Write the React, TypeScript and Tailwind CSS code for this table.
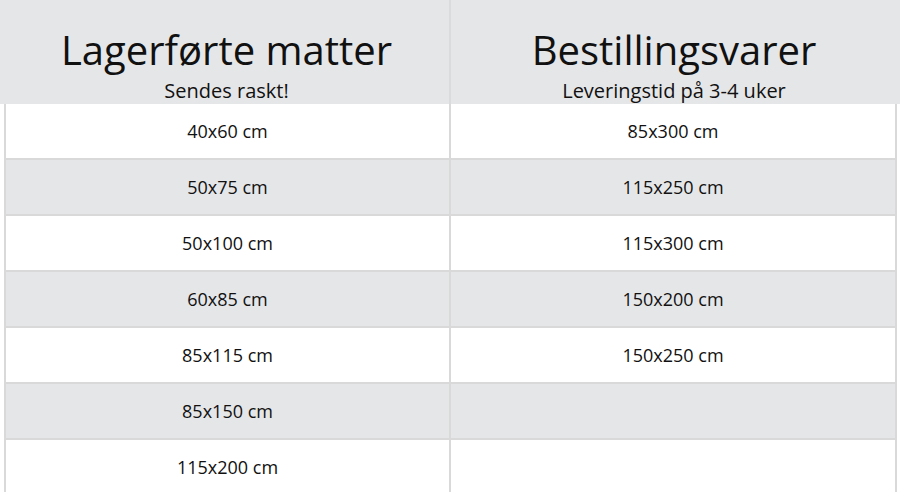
import React from "react";

const lager = ["40x60 cm", "50x75 cm", "50x100 cm", "60x85 cm", "85x115 cm", "85x150 cm", "115x200 cm"];
const bestilling = ["85x300 cm", "115x250 cm", "115x300 cm", "150x200 cm", "150x250 cm", "", ""];

export default function App() {
  return (
    <div className="w-[900px] h-[492px] overflow-hidden bg-white text-[#111] font-['Open_Sans',sans-serif]">
      {/* header */}
      <div className="bg-[#e5e6e8] pl-[4px] pr-[3px]">
        <div className="grid grid-cols-[447px_1fr] h-[104px]">
          <div className="flex flex-col items-center justify-end pb-[1px] border-r-2 border-[#dadbdd]">
            <h2 className="text-[40px] leading-[48px] mb-[5px]">Lagerførte matter</h2>
            <p className="text-[20px] leading-[24px]">Sendes raskt!</p>
          </div>
          <div className="flex flex-col items-center justify-end pb-[1px]">
            <h2 className="text-[40px] leading-[48px] mb-[5px]">Bestillingsvarer</h2>
            <p className="text-[20px] leading-[24px]">Leveringstid på 3-4 uker</p>
          </div>
        </div>
      </div>

      {/* rows */}
      <div className="ml-[4px] mr-[3px] border-x-2 border-[#d9d9d9]">
        {lager.map((size, i) => (
          <div
            key={size}
            className={`grid grid-cols-[445px_1fr] h-[56px] border-b-2 border-[#d9d9d9] ${i % 2 === 0 ? "bg-white" : "bg-[#e5e6e8]"}`}
          >
            <div className="flex items-center justify-center pt-[1px] text-[18px] border-r-2 border-[#d9d9d9]">{size}</div>
            <div className="flex items-center justify-center pt-[1px] text-[18px]">{bestilling[i]}</div>
          </div>
        ))}
      </div>
    </div>
  );
}
